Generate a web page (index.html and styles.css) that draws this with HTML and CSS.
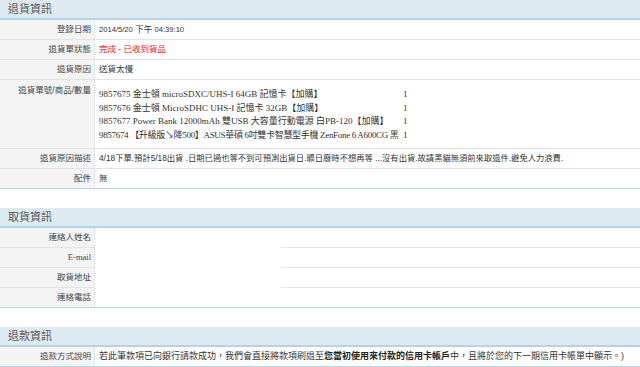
FILE: index.html
```html
<!DOCTYPE html>
<html>
<head>
<meta charset="utf-8">
<link rel="stylesheet" href="styles.css">
</head>
<body>
<section class="sec">
  <div class="head">退貨資訊</div>
  <div class="row"><div class="lbl">登錄日期</div><div class="val"><span class="lat">2014/5/20</span> 下午 <span class="lat">04:39:10</span></div></div>
  <div class="row"><div class="lbl">退貨單狀態</div><div class="val red">完成 - 已收到貨品</div></div>
  <div class="row"><div class="lbl">退貨原因</div><div class="val">送貨太慢</div></div>
  <div class="row"><div class="lbl top">退貨單號/商品/數量</div>
    <div class="val items">
      <div class="item"><span class="nm">9857675 金士頓 microSDXC/UHS-I 64GB 記憶卡【加購】</span><span class="qty">1</span></div>
      <div class="item"><span class="nm">9857676 金士頓 MicroSDHC UHS-I 記憶卡 32GB【加購】</span><span class="qty">1</span></div>
      <div class="item"><span class="nm">9857677 Power Bank 12000mAh 雙USB 大容量行動電源 白PB-120【加購】</span><span class="qty">1</span></div>
      <div class="item"><span class="nm tight">9857674 【升級版↘降500】ASUS華碩 6吋雙卡智慧型手機 ZenFone 6 A600CG 黑</span><span class="qty">1</span></div>
    </div>
  </div>
  <div class="row"><div class="lbl">退貨原因描述</div><div class="val desc">4/18下單.預計5/18出貨 .日期已過也等不到可預測出貨日.曠日廢時不想再等 ...沒有出貨.故請黑貓無須前來取退件.避免人力浪費.</div></div>
  <div class="row last"><div class="lbl">配件</div><div class="val">無</div></div>
</section>

<section class="sec">
  <div class="head">取貨資訊</div>
  <div class="row pick"><div class="lbl">連絡人姓名</div><div class="val split"><span class="blank"></span><span class="rest"></span></div></div>
  <div class="row pick"><div class="lbl serif">E-mail</div><div class="val split"><span class="blank"></span><span class="rest"></span></div></div>
  <div class="row pick"><div class="lbl">取貨地址</div><div class="val split"><span class="blank"></span><span class="rest"></span></div></div>
  <div class="row last"><div class="lbl">連絡電話</div><div class="val"></div></div>
</section>

<section class="sec">
  <div class="head">退款資訊</div>
  <div class="row last"><div class="lbl">退款方式說明</div><div class="val refund">若此筆款項已向銀行請款成功，我們會直接將款項刷退至<b>您當初使用來付款的信用卡帳戶</b>中，且將於您的下一期信用卡帳單中顯示。)</div></div>
</section>
</body>
</html>
```
FILE: styles.css
```css
html, body {
  margin: 0;
  padding: 0;
  background: #fff;
}
body {
  font-family: "Liberation Sans", Arial, "Noto Sans CJK TC", sans-serif;
  font-size: 8.5px;
  color: #333;
}
.sec {
  margin-bottom: 19px;
  border-bottom: 1px solid #b9d6e6;
}
.head {
  height: 18px;
  line-height: 19px;
  background: #deeaf2;
  border-bottom: 2px solid #b3d3e6;
  padding-left: 8px;
  font-size: 11px;
  color: #555;
}
.row {
  display: grid;
  grid-template-columns: 95px 1fr;
  border-bottom: 1px solid #e3e3e3;
}
.row.last {
  border-bottom: none;
}
.row.pick {
  border-bottom: none;
}
.row.pick .lbl {
  border-bottom: 1px solid #e3e3e3;
}
.lbl {
  background: #f4f4f4;
  border-right: 1px dotted #d6d6d6;
  text-align: right;
  padding: 0 3px 0 0;
  line-height: 19px;
  min-height: 19px;
  color: #444;
  white-space: nowrap;
}
.lbl.top {
  padding-top: 1px;
}
.serif {
  font-family: "Liberation Serif", "Times New Roman", serif;
}
.val {
  padding: 0 0 0 4px;
  line-height: 19px;
  min-height: 19px;
  color: #333;
  white-space: nowrap;
}
.desc {
  font-size: 8.3px;
}
.refund {
  font-size: 9px;
}
.lat {
  font-size: 7.6px;
}
.red {
  color: #e8141c;
}
.val b {
  color: #222;
}
.items {
  padding: 8px 0 5px 4px;
  font-family: "Liberation Serif", "Times New Roman", "Noto Sans CJK TC", serif;
  font-size: 9px;
}
.item {
  display: flex;
  line-height: 13.7px;
}
.nm {
  width: 304px;
  white-space: nowrap;
}
.nm.tight {
  letter-spacing: -0.32px;
}
.qty {
  width: 20px;
}
.split {
  display: flex;
  padding: 0;
}
.blank {
  width: 186px;
}
.rest {
  flex: 1;
  border-bottom: 1px solid #e3e3e3;
}
```
